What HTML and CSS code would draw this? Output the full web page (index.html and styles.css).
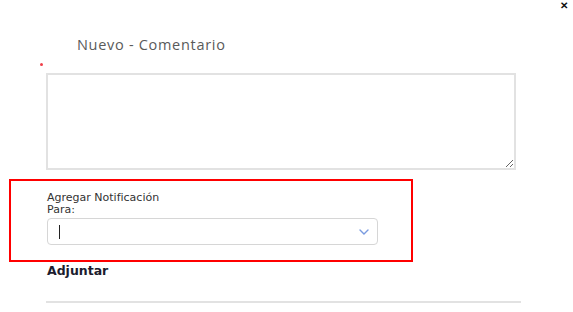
FILE: index.html
```html
<!DOCTYPE html>
<html lang="es">
<head>
  <meta charset="UTF-8">
  <meta name="viewport" content="width=device-width, initial-scale=1.0">
  <title>Nuevo Comentario</title>
  <link rel="stylesheet" href="styles.css">
</head>
<body>

  <div class="modal">
    <button class="close-btn" type="button">&#10005;</button>

    <h2 class="modal-title">Nuevo - Comentario</h2>

    <span class="required-dot"></span>
    <textarea class="comment-box"></textarea>

    <!-- Notification block -->
    <div class="notify-box">
      <label class="notify-label">Agregar Notificación<br>Para:</label>
      <div class="select-field">
        <span class="caret"></span>
        <svg class="chevron" width="10" height="6" viewBox="0 0 10 6">
          <path d="M1 1 L5 5 L9 1" fill="none" stroke="#7a9be0" stroke-width="1.4" stroke-linecap="round"/>
        </svg>
      </div>
    </div>

    <h4 class="attach-title">Adjuntar</h4>
    <hr class="divider">
  </div>

</body>
</html>
```

FILE: styles.css
```css
/* General Styles */
body {
  margin: 0;
  padding: 0;
  background-color: #fff;
  font-family: "DejaVu Sans", Verdana, sans-serif;
}

.modal {
  position: relative;
  width: 573px;
  height: 312px;
  padding-top: 37px;
  box-sizing: border-box;
}

.close-btn {
  position: absolute;
  top: 0;
  right: 5px;
  background: none;
  border: none;
  padding: 0;
  font-size: 10px;
  line-height: 11px;
  font-weight: bold;
  color: #111;
  cursor: pointer;
}

.modal-title {
  margin: 0 0 0 77px;
  font-family: "Open Sans", sans-serif;
  font-size: 14.5px;
  font-weight: 400;
  line-height: 16px;
  letter-spacing: 0.7px;
  color: #5a5a5a;
}

.required-dot {
  display: block;
  width: 3px;
  height: 3px;
  margin: 10px 0 0 40px;
  border-radius: 50%;
  background-color: #f0404a;
}

/* Comment box */
.comment-box {
  display: block;
  width: 470px;
  height: 97px;
  margin: 7px 0 0 46px;
  border: 2px solid #e2e2e2;
  box-sizing: border-box;
  resize: vertical;
}

/* Notification Styles */
.notify-box {
  width: 404px;
  height: 83px;
  margin: 9px 0 0 9px;
  padding: 11px 0 0 36px;
  border: 2px solid #ff0000;
  box-sizing: border-box;
}

.notify-label {
  display: block;
  font-size: 11px;
  line-height: 12px;
  color: #333;
}

.select-field {
  display: flex;
  align-items: center;
  justify-content: space-between;
  width: 331px;
  height: 27px;
  margin-top: 2px;
  padding: 0 8px 0 11px;
  border: 1px solid #d6d6d6;
  border-radius: 4px;
  box-sizing: border-box;
}

.caret {
  width: 1px;
  height: 14px;
  background-color: #222;
}

/* Attach Styles */
.attach-title {
  margin: 2px 0 0 47px;
  font-size: 12.5px;
  font-weight: bold;
  line-height: 14px;
  color: #1c1c2e;
}

.divider {
  width: 475px;
  margin: 23px 0 0 46px;
  border: none;
  height: 2px;
  background-color: #e2e2e2;
}
```
